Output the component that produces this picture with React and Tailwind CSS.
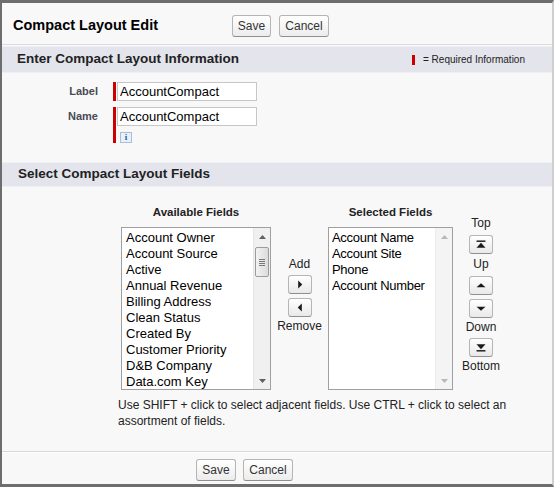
import React from 'react';

function Btn({ children, className = '' }) {
  return (
    <button
      className={`h-[22px] rounded-[3px] border border-[#b5b5b5] border-b-[#8f8f8f] bg-linear-to-b from-white to-[#ececec] text-[12px] leading-[20px] text-[#333] ${className}`}
    >
      {children}
    </button>
  );
}

function ArrowBtn({ kind, className = '' }) {
  // small square buttons used for add / remove / move
  const tri = {
    right: <path d="M9.5 5 L14 9.5 L9.5 14 Z" />,
    left: <path d="M13.5 5 L9 9.5 L13.5 14 Z" />,
    up: <path d="M6.5 11.5 L11.5 7 L16.5 11.5 Z" />,
    down: <path d="M6.5 7.5 L11.5 12 L16.5 7.5 Z" />,
    top: (
      <>
        <rect x="6.5" y="5" width="10" height="1.6" />
        <path d="M6.5 13 L11.5 7.5 L16.5 13 Z" />
      </>
    ),
    bottom: (
      <>
        <path d="M6.5 6 L11.5 11.5 L16.5 6 Z" />
        <rect x="6.5" y="12.4" width="10" height="1.6" />
      </>
    ),
  };
  return (
    <div
      className={`w-[24px] h-[19px] rounded-[3px] border border-[#b5b5b5] border-b-[#8f8f8f] bg-linear-to-b from-white to-[#e9e9e9] ${className}`}
    >
      <svg width="22" height="17" viewBox="0 0 23 19" className="fill-[#1a1a1a]">
        {tri[kind]}
      </svg>
    </div>
  );
}

function ScrollArrow({ dir, color }) {
  return (
    <div className="h-[17px] flex items-center justify-center">
      <svg width="7" height="4" viewBox="0 0 7 4" style={{ fill: color }}>
        {dir === 'up' ? <path d="M0 4 L3.5 0 L7 4 Z" /> : <path d="M0 0 L3.5 4 L7 0 Z" />}
      </svg>
    </div>
  );
}

const available = [
  'Account Owner',
  'Account Source',
  'Active',
  'Annual Revenue',
  'Billing Address',
  'Clean Status',
  'Created By',
  'Customer Priority',
  'D&B Company',
  'Data.com Key',
];

const selected = ['Account Name', 'Account Site', 'Phone', 'Account Number'];

export default function App() {
  return (
    <div className="w-[554px] h-[487px] bg-[#f8f8f8] border-t-[3px] border-l-2 border-b-[3px] border-r-2 border-t-[#6d6d6d] border-l-[#6d6d6d] border-b-[#6d6d6d] border-r-[#cfcfcf] font-['Liberation_Sans',Arial,sans-serif] text-[#222] flex flex-col overflow-hidden">
      {/* page header */}
      <div className="h-[42px] flex items-center pl-[11px] pt-[4px] border-b border-[#dcdcdc]">
        <h1 className="w-[219px] text-[14.5px] font-bold text-black">Compact Layout Edit</h1>
        <Btn className="w-[39px]">Save</Btn>
        <Btn className="w-[50px] ml-[8px]">Cancel</Btn>
      </div>

      {/* section 1 */}
      <div className="mt-[1px] h-[27px] bg-[#e3e4ec] border-y border-[#eff0f6] flex items-center pl-[15px] pr-[27px]">
        <h2 className="text-[13.5px] font-bold text-[#222]">Enter Compact Layout Information</h2>
        <div className="ml-auto flex items-center text-[10px] text-[#222]">
          <span className="w-[3px] h-[10px] bg-[#c00] mr-[8px]" />= Required Information
        </div>
      </div>

      <div className="mt-[9px] flex flex-col gap-[6px]">
        <div className="flex">
          <div className="w-[96px] text-right text-[11px] font-bold text-[#4a4a56] pt-[1px]">Label</div>
          <div className="ml-[15px] flex">
            <span className="w-[3px] h-[19px] bg-[#c00]" />
            <div className="ml-[1px] w-[140px] h-[19px] bg-white border border-[#c6c6c6] text-[13px] leading-[17px] pl-[2px] text-black">
              AccountCompact
            </div>
          </div>
        </div>
        <div className="flex">
          <div className="w-[96px] text-right text-[11px] font-bold text-[#4a4a56] pt-[1px]">Name</div>
          <div className="ml-[15px] flex">
            <span className="w-[3px] h-[36px] bg-[#c00]" />
            <div className="ml-[1px] flex flex-col">
              <div className="w-[140px] h-[19px] bg-white border border-[#c6c6c6] text-[13px] leading-[17px] pl-[2px] text-black">
                AccountCompact
              </div>
              <div className="mt-[6px] ml-[3px] w-[12px] h-[11px] bg-[#e8f1fb] border border-[#a9bfd6] flex items-center justify-center font-['Liberation_Serif',serif] font-bold text-[9px] leading-none text-[#2a5d9a]">
                i
              </div>
            </div>
          </div>
        </div>
      </div>

      {/* section 2 */}
      <div className="mt-[19px] h-[25px] bg-[#e3e4ec] border-y border-[#eff0f6] flex items-center pl-[16px]">
        <h2 className="text-[13.5px] font-bold text-[#222]">Select Compact Layout Fields</h2>
      </div>

      <div className="mt-[19px] flex items-start pl-[119px]">
        <div className="w-[150px] flex flex-col">
          <div className="h-[21px] text-center text-[11.5px] font-bold leading-[13px] text-[#222]">Available Fields</div>
          <div className="h-[163px] bg-white border border-[#a0a0a0] flex">
            <ul className="flex-1 pt-[2px] pl-[4px] text-[13px] leading-[16px] text-black overflow-hidden whitespace-nowrap">
              {available.map((f) => (
                <li key={f}>{f}</li>
              ))}
            </ul>
            <div className="w-[17px] bg-[#f0f0f0] border-l border-[#e6e6e6] flex flex-col">
              <ScrollArrow dir="up" color="#606060" />
              <div className="mt-[2px] mx-[1px] h-[30px] rounded-[2px] border border-[#9c9c9c] bg-linear-to-r from-[#f2f2f2] to-[#dcdcdc] flex flex-col items-center justify-center gap-[1px]">
                <span className="w-[6px] h-px bg-[#7a7a7a]" />
                <span className="w-[6px] h-px bg-[#7a7a7a]" />
                <span className="w-[6px] h-px bg-[#7a7a7a]" />
                <span className="w-[6px] h-px bg-[#7a7a7a]" />
              </div>
              <div className="flex-1" />
              <ScrollArrow dir="down" color="#606060" />
            </div>
          </div>
        </div>

        <div className="w-[57px] flex flex-col items-center pt-[51px] text-[12px] leading-[14px] text-[#222]">
          <span>Add</span>
          <ArrowBtn kind="right" className="mt-[4px]" />
          <ArrowBtn kind="left" className="mt-[4px]" />
          <span className="mt-[2px]">Remove</span>
        </div>

        <div className="w-[125px] flex flex-col">
          <div className="h-[21px] text-center text-[11.5px] font-bold leading-[13px] text-[#222]">Selected Fields</div>
          <div className="h-[163px] bg-white border border-[#a0a0a0] flex">
            <ul className="flex-1 pt-[2px] pl-[3px] text-[13px] leading-[16px] tracking-[-0.3px] text-black overflow-hidden whitespace-nowrap">
              {selected.map((f) => (
                <li key={f}>{f}</li>
              ))}
            </ul>
            <div className="w-[17px] bg-[#f4f4f4] border-l border-[#ececec] flex flex-col justify-between">
              <ScrollArrow dir="up" color="#b8b8b8" />
              <ScrollArrow dir="down" color="#b8b8b8" />
            </div>
          </div>
        </div>

        <div className="ml-[7px] w-[42px] flex flex-col items-center pt-[10px] text-[12px] leading-[14px] text-[#222]">
          <span>Top</span>
          <ArrowBtn kind="top" className="mt-[5px]" />
          <span className="mt-[3px]">Up</span>
          <ArrowBtn kind="up" className="mt-[5px]" />
          <ArrowBtn kind="down" className="mt-[4px]" />
          <span className="mt-[2px]">Down</span>
          <ArrowBtn kind="bottom" className="mt-[4px]" />
          <span className="mt-[2px]">Bottom</span>
        </div>
      </div>

      <p className="mt-[7px] ml-[116px] w-[410px] text-[12px] leading-[16px] text-[#222]">
        Use SHIFT + click to select adjacent fields. Use CTRL + click to select an assortment of fields.
      </p>

      <div className="mt-auto border-t border-[#d8d8d8] shadow-[inset_0_1px_0_#ffffff] h-[33px] flex items-center justify-center pr-[2px] pt-[3px]">
        <div className="flex ml-[-63px]">
          <Btn className="w-[40px]">Save</Btn>
          <Btn className="w-[50px] ml-[7px]">Cancel</Btn>
        </div>
      </div>
    </div>
  );
}
